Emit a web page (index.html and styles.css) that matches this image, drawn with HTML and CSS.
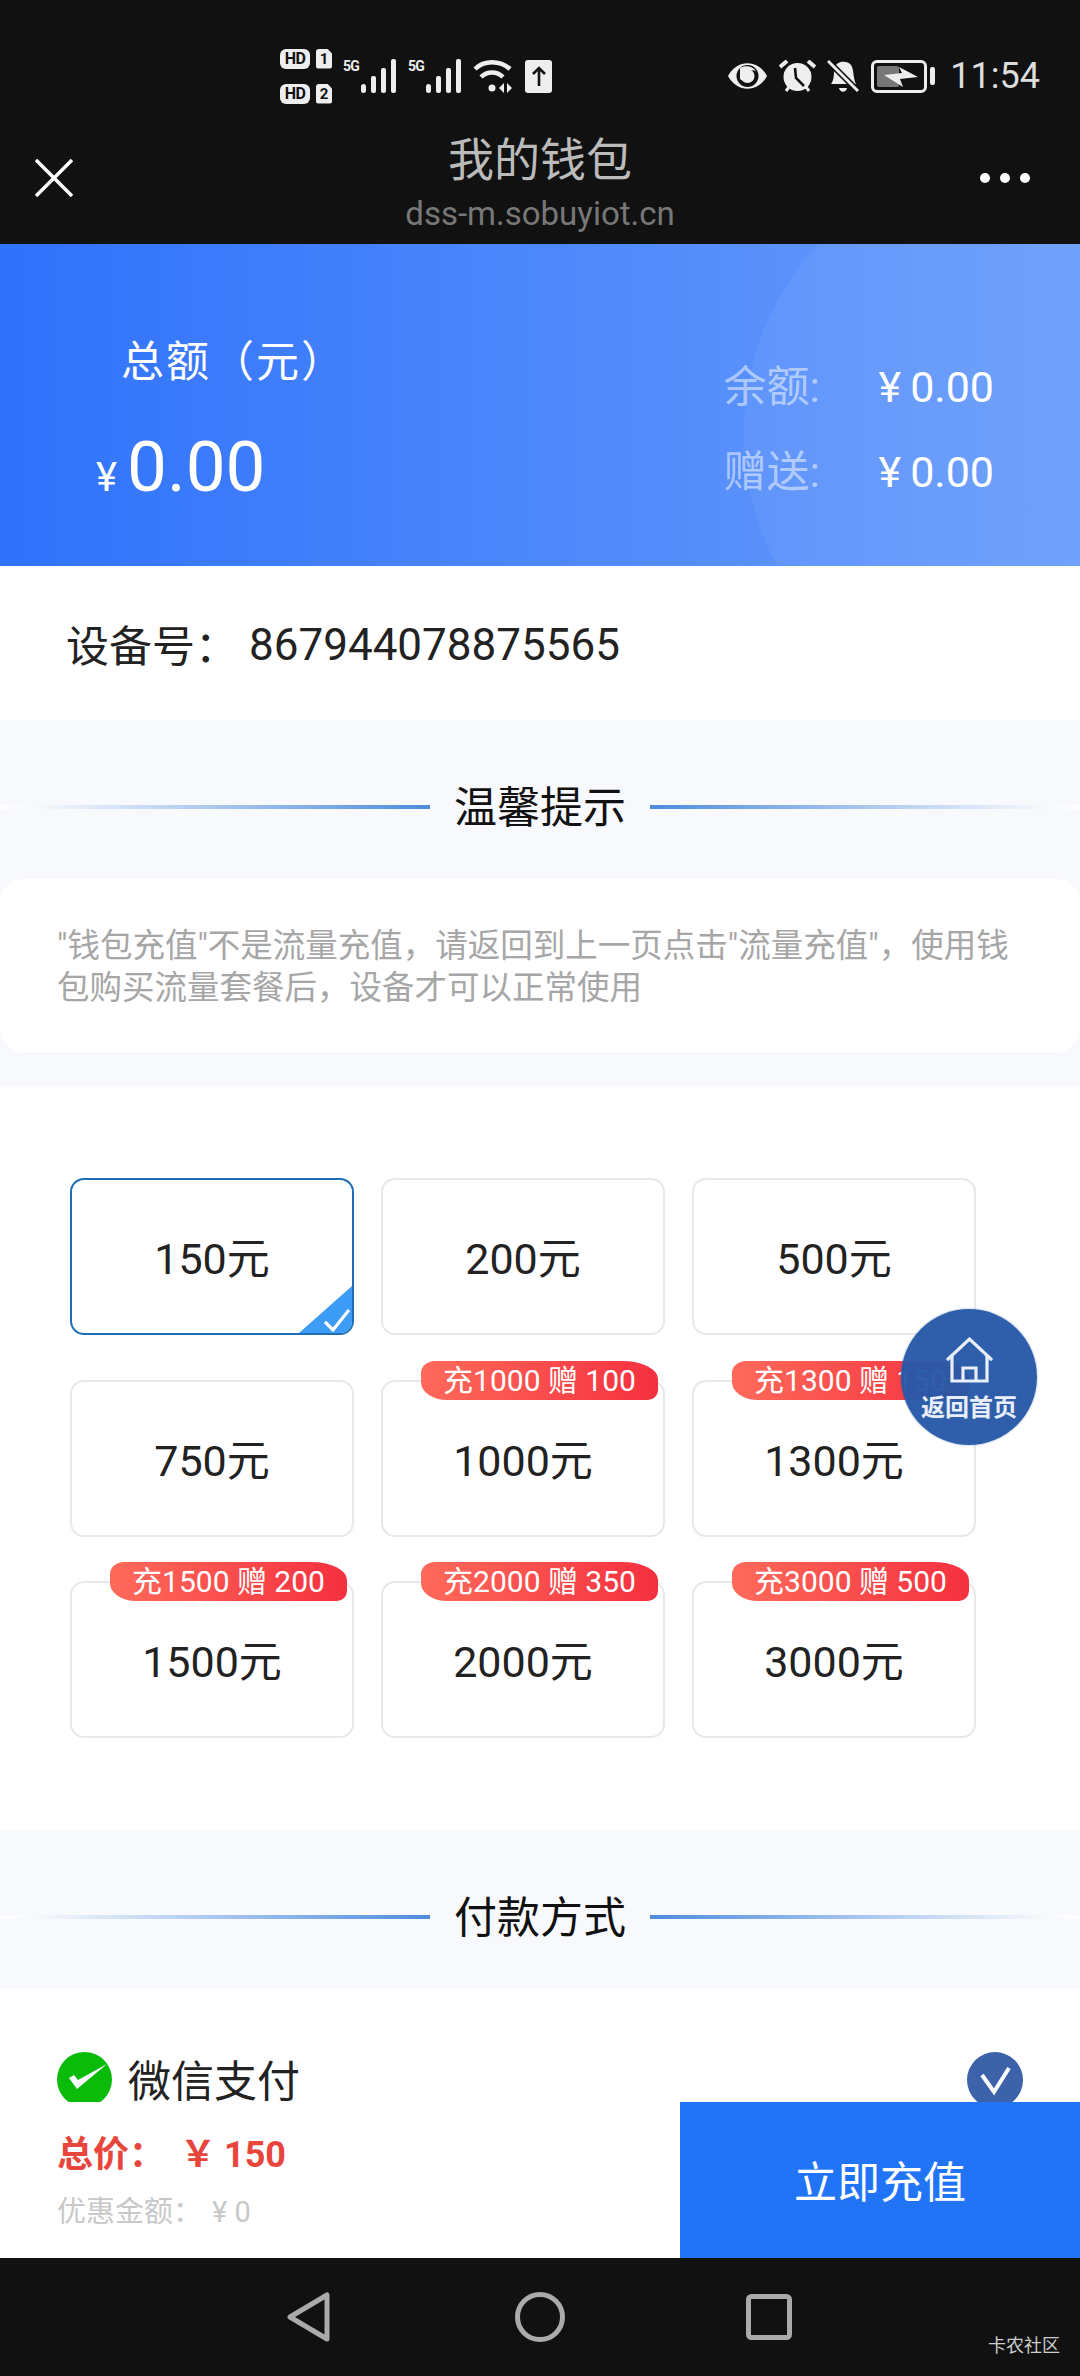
FILE: index.html
```html
<!DOCTYPE html>
<html lang="zh-CN">
<head>
  <meta charset="UTF-8">
  <title>我的钱包</title>
  <link rel="stylesheet" href="styles.css">
</head>
<body>
  <div class="page">

    <div class="topbar">
      <div class="statusbar">
        <div class="hd-col">
          <div class="hd-row"><span class="hd">HD</span><span class="sim">1</span></div>
          <div class="hd-row"><span class="hd">HD</span><span class="sim">2</span></div>
        </div>
        <div class="signal">
          <span>5G</span>
          <svg width="35" height="34" viewBox="0 0 35 34" fill="#eee"><rect x="0" y="25" width="5" height="9" rx="2.5"/><rect x="10" y="17" width="5" height="17" rx="2"/><rect x="20" y="9" width="5" height="25" rx="2"/><rect x="30" y="0" width="5" height="34" rx="2"/></svg>
        </div>
        <div class="signal">
          <span>5G</span>
          <svg width="35" height="34" viewBox="0 0 35 34" fill="#eee"><rect x="0" y="25" width="5" height="9" rx="2.5"/><rect x="10" y="17" width="5" height="17" rx="2"/><rect x="20" y="9" width="5" height="25" rx="2"/><rect x="30" y="0" width="5" height="34" rx="2"/></svg>
        </div>
        <svg class="wifi" width="39" height="34" viewBox="0 0 39 34" fill="none" stroke="#eee" stroke-width="4.5"><path d="M2 10 C11 1 27 1 37 10"/><path d="M8 18 C14 12 24 12 30 18"/><circle cx="19" cy="29" r="3.5" fill="#eee" stroke="none"/><path d="M31 24 L26 29 L31 34Z" fill="#eee" stroke="none"/><path d="M34 24 L39 29 L34 34Z" fill="#eee" stroke="none"/></svg>
        <div class="upbox">
          <svg width="14" height="20" viewBox="0 0 14 20" fill="none" stroke="#111" stroke-width="2.6"><path d="M7 20V2M1 8L7 2L13 8"/></svg>
        </div>
        <div class="status-right">
          <svg width="41" height="28" viewBox="0 0 41 28"><path d="M1 14 C10 -3 31 -3 40 14 C31 31 10 31 1 14Z" fill="#eee"/><circle cx="20.500" cy="14" r="11" fill="#111"/><circle cx="20.500" cy="14" r="7" fill="#eee"/><path d="M13 6 C18 3 26 4 29 9 C24 7 20 10 19 15 C18 19 15 19 13 17Z" fill="#eee"/></svg>
          <svg width="37" height="32" viewBox="0 0 37 32"><circle cx="18.500" cy="17" r="14" fill="#eee"/><path d="M16 8 L17 18 L25 26" fill="none" stroke="#111" stroke-width="2.6"/><path d="M1 7 L8 1M36 7 L29 1" stroke="#eee" stroke-width="4"/><path d="M7 31 L10 27M30 31 L27 27" stroke="#eee" stroke-width="3"/></svg>
          <svg width="32" height="34" viewBox="0 0 32 34"><path d="M4 25 C8 20 6 14 8 8 C10 2 20 1 24 6 C27 10 26 20 29 25Z" fill="#eee"/><path d="M12 29 C13 34 19 34 20 29Z" fill="#eee"/><path d="M1 2 L31 32" stroke="#111" stroke-width="6"/><path d="M1 2 L31 32" stroke="#eee" stroke-width="3"/></svg>
          <div class="battery">
            <div class="battery-box">
              <div class="battery-fill"></div>
              <svg class="bolt" width="34" height="20" viewBox="0 0 34 20" fill="#eee"><path d="M0 8 L18 6 L15 0 L34 10 L16 12 L19 20Z"/></svg>
            </div>
            <div class="battery-nub"></div>
          </div>
          <span class="clock">11:54</span>
        </div>
      </div>
      <div class="navbar">
        <svg width="38" height="38" viewBox="0 0 38 38" stroke="#fff" stroke-width="3.500"><path d="M1 1L37 37M37 1L1 37"/></svg>
        <div class="nav-title">
          <div class="nav-name">我的钱包</div>
          <div class="nav-url">dss-m.sobuyiot.cn</div>
        </div>
        <div class="dots"><i></i><i></i><i></i></div>
      </div>
    </div>

    <div class="hero">
      <div class="hero-left">
        <div class="hero-label">总额（元）</div>
        <div class="hero-amount"><span class="yen">¥</span>0.00</div>
      </div>
      <div class="hero-right">
        <div class="hero-row"><span class="hero-key">余额:</span><span class="hero-val"><span class="yen-s">¥</span>0.00</span></div>
        <div class="hero-row"><span class="hero-key">赠送:</span><span class="hero-val"><span class="yen-s">¥</span>0.00</span></div>
      </div>
    </div>

    <div class="device">
      <span class="device-key">设备号：</span><span class="device-no">867944078875565</span>
    </div>

    <div class="tips">
      <div class="sec-title">
        <div class="line"></div><h2>温馨提示</h2><div class="line line-r"></div>
      </div>
      <div class="notice">"钱包充值"不是流量充值，请返回到上一页点击"流量充值"，使用钱包购买流量套餐后，设备才可以正常使用</div>
    </div>

    <div class="options">
      <div class="grid">
        <div class="card selected">150元
          <div class="corner">
            <svg width="26" height="24" viewBox="0 0 26 24" fill="none" stroke="#fff" stroke-width="3.200"><path d="M1 14L9 22L25 2"/></svg>
          </div>
        </div>
        <div class="card">200元</div>
        <div class="card">500元</div>
        <div class="card">750元</div>
        <div class="card">1000元<span class="badge">充1000 赠 100</span></div>
        <div class="card">1300元<span class="badge">充1300 赠 150</span></div>
        <div class="card">1500元<span class="badge">充1500 赠 200</span></div>
        <div class="card">2000元<span class="badge">充2000 赠 350</span></div>
        <div class="card">3000元<span class="badge">充3000 赠 500</span></div>
      </div>
      <div class="home-btn">
        <svg width="47" height="46" viewBox="0 0 47 46" fill="none" stroke="#e8eefa" stroke-width="3.200"><path d="M1 23L23.500 2L46 23"/><path d="M6 19V44H41V19"/><path d="M17 44V31H30V44"/></svg>
        <span>返回首页</span>
      </div>
    </div>

    <div class="paytitle">
      <div class="sec-title">
        <div class="line"></div><h2>付款方式</h2><div class="line line-r"></div>
      </div>
    </div>

    <div class="payrow">
      <svg width="55" height="50" viewBox="0 0 55 50"><circle cx="27.500" cy="27.500" r="27.500" fill="#0abb0a"/><path d="M12 26L17 23L21 28L50 12L20 37Z" fill="#fff"/></svg>
      <span class="pay-name">微信支付</span>
      <svg class="pay-check" width="56" height="50" viewBox="0 0 56 50"><circle cx="28" cy="28" r="28" fill="#3c62aa"/><path d="M15 23L27 40L42 16" fill="none" stroke="#fff" stroke-width="4"/></svg>
    </div>

    <div class="checkout">
      <div class="sum">
        <div class="sum-total">总价：<span class="sum-price"><span class="sum-yen">￥</span>150</span></div>
        <div class="sum-off">优惠金额：<span class="sum-off-val">¥ 0</span></div>
      </div>
      <div class="pay-btn">立即充值</div>
    </div>

    <div class="sysnav">
      <svg width="44" height="50" viewBox="0 0 44 50" fill="none" stroke="#aaa" stroke-width="5" stroke-linejoin="round"><path d="M40 3V47L3 25Z"/></svg>
      <svg class="nav-home" width="50" height="50" viewBox="0 0 50 50" fill="none" stroke="#aaa" stroke-width="5"><circle cx="25" cy="25" r="22.500"/></svg>
      <svg class="nav-recent" width="46" height="46" viewBox="0 0 46 46" fill="none" stroke="#aaa" stroke-width="5"><rect x="2.500" y="2.500" width="41" height="41" rx="3"/></svg>
      <span class="watermark">卡农社区</span>
    </div>

  </div>
</body>
</html>
```

FILE: styles.css
```css
* {
  box-sizing: border-box;
}

body {
  margin: 0;
  background: #fff;
  font-family: Roboto, 'Noto Sans CJK SC', sans-serif;
  color: #222;
}

.page {
  width: 1080px;
  height: 2376px;
  overflow: hidden;
  display: flex;
  flex-direction: column;
}

/* top bars */
.topbar {
  height: 244px;
  background: #111;
}

.statusbar {
  height: 124px;
  padding: 28px 40px 0 280px;
  display: flex;
  align-items: center;
}

.hd-col {
  display: flex;
  flex-direction: column;
  gap: 15px;
  margin-right: 11px;
}

.hd-row {
  display: flex;
  gap: 6px;
}

.hd {
  width: 30px;
  height: 20px;
  background: #eee;
  color: #111;
  border-radius: 6px;
  font-size: 16px;
  font-weight: 700;
  line-height: 20px;
  text-align: center;
  letter-spacing: -0.5px;
}

.sim {
  width: 16px;
  height: 20px;
  background: #eee;
  color: #111;
  border-radius: 3px;
  font-size: 15px;
  font-weight: 700;
  line-height: 20px;
  text-align: center;
  clip-path: polygon(0 0, 70% 0, 100% 25%, 100% 100%, 0 100%);
}

.signal {
  display: flex;
  align-items: flex-start;
  width: 53px;
  margin-right: 12px;
}

.signal span {
  width: 18px;
  font-size: 14px;
  font-weight: 700;
  line-height: 14px;
  color: #eee;
  letter-spacing: -0.8px;
}

.wifi {
  margin-right: 13px;
}

.upbox {
  width: 27px;
  height: 33px;
  background: #eee;
  border-radius: 3px;
  display: flex;
  align-items: center;
  justify-content: center;
}

.status-right {
  margin-left: auto;
  display: flex;
  align-items: center;
  gap: 11px;
}

.battery {
  display: flex;
  align-items: center;
  gap: 3px;
  margin-left: 1px;
}

.battery-box {
  position: relative;
  width: 56px;
  height: 33px;
  border: 3px solid #eee;
  border-radius: 6px;
  padding: 3px;
}

.battery-fill {
  width: 22px;
  height: 100%;
  background: #777;
  border-radius: 2px;
}

.bolt {
  position: absolute;
  top: 4px;
  left: 10px;
}

.battery-nub {
  width: 5px;
  height: 18px;
  background: #eee;
  border-radius: 2px;
}

.clock {
  margin-left: 4px;
  font-size: 36px;
  line-height: 40px;
  color: #ddd;
}

.navbar {
  height: 120px;
  padding: 0 50px 0 35px;
  display: flex;
  align-items: center;
}

.navbar svg {
  margin-top: -12px;
}

.nav-title {
  flex: 1;
  text-align: center;
  padding-left: 27px;
}

.nav-name {
  font-size: 46px;
  line-height: 52px;
  color: #bbb;
}

.nav-url {
  font-size: 33px;
  line-height: 40px;
  margin-top: 8px;
  color: #777;
}

.dots {
  display: flex;
  gap: 10px;
  margin-top: -12px;
}

.dots i {
  width: 10px;
  height: 10px;
  border-radius: 50%;
  background: #fff;
}

/* blue header */
.hero {
  position: relative;
  height: 322px;
  overflow: hidden;
  background: linear-gradient(90deg, #2f72fb, #6a9dfb);
  display: flex;
  justify-content: space-between;
  color: #fff;
}

.hero::after {
  content: "";
  position: absolute;
  left: 744px;
  top: -90px;
  width: 560px;
  height: 560px;
  border-radius: 50%;
  background: rgba(255, 255, 255, 0.05);
}

.hero-left {
  padding: 95px 0 0 96px;
}

.hero-label {
  font-size: 43px;
  line-height: 46px;
  margin-left: 25px;
  letter-spacing: 2px;
}

.hero-amount {
  margin-top: 40px;
  font-size: 71px;
  line-height: 84px;
}

.yen {
  font-size: 40px;
  margin-right: 10px;
}

.hero-right {
  position: relative;
  z-index: 1;
  padding: 119px 86px 0 0;
  display: flex;
  flex-direction: column;
  gap: 37px;
}

.hero-row {
  display: flex;
  height: 48px;
  line-height: 48px;
}

.hero-key {
  width: 155px;
  font-size: 43px;
  color: rgba(255, 255, 255, 0.5);
}

.hero-val {
  font-size: 43px;
}

.yen-s {
  margin-right: 9px;
}

/* device row */
.device {
  height: 154px;
  padding-left: 66px;
  display: flex;
  align-items: center;
  font-size: 43px;
  color: #222;
}

.device-key {
  width: 183px;
}

.device-no {
  margin-top: 3px;
  font-size: 44px;
}

/* section title */
.sec-title {
  height: 159px;
  padding-top: 68px;
  display: flex;
  justify-content: center;
  align-items: flex-start;
  gap: 24px;
}

.sec-title h2 {
  margin: 0;
  font-size: 43px;
  font-weight: 400;
  line-height: 40px;
  color: #111;
}

.line {
  width: 430px;
  height: 4px;
  margin-top: 17px;
  background: linear-gradient(90deg, #fff 0, #f7f9fd 8%, #4d8cde 100%);
}

.line-r {
  background: linear-gradient(270deg, #fff 0, #f7f9fd 8%, #4d8cde 100%);
}

.tips {
  height: 366px;
  background: #f7f9fd;
}

.notice {
  height: 173px;
  padding: 46px 57px 0;
  background: #fff;
  border-radius: 24px;
  font-size: 32.5px;
  line-height: 42px;
  color: #a6a6a6;
}

/* amounts */
.options {
  position: relative;
  height: 744px;
  padding: 92px 0 0 70px;
}

.grid {
  display: grid;
  grid-template-columns: repeat(3, 284px);
  grid-auto-rows: 157px;
  column-gap: 27px;
  row-gap: 44.5px;
}

.card {
  position: relative;
  border: 2px solid #e8e8e8;
  border-radius: 14px;
  padding-bottom: 3px;
  display: flex;
  align-items: center;
  justify-content: center;
  font-size: 43px;
  color: #222;
}

.selected {
  border-color: #1e6fb8;
  overflow: hidden;
}

.corner {
  position: absolute;
  right: 0;
  bottom: 0;
  width: 53px;
  height: 47px;
  background: #3d9cf5;
  clip-path: polygon(100% 0, 100% 100%, 0 100%);
}

.corner svg {
  position: absolute;
  right: 2px;
  bottom: 1px;
}

.badge {
  position: absolute;
  top: -21px;
  left: 38px;
  width: 237px;
  height: 39px;
  border-radius: 14px 36px 10px 26px / 12px 18px 10px 18px;
  background: linear-gradient(90deg, #ff6a5a, #f5303f);
  color: #fff;
  font-size: 30px;
  line-height: 39px;
  text-align: center;
  white-space: nowrap;
}

.home-btn {
  position: absolute;
  left: 901px;
  top: 223px;
  width: 136px;
  height: 136px;
  border-radius: 50%;
  background: rgba(38, 88, 168, 0.96);
  box-shadow: 0 0 2px rgba(38, 88, 168, 0.6);
  display: flex;
  flex-direction: column;
  align-items: center;
  padding-top: 28px;
  color: #e8eefa;
}

.home-btn span {
  margin-top: 10px;
  font-size: 24px;
  font-weight: 700;
  line-height: 30px;
}

/* payment */
.paytitle {
  height: 159px;
  background: #f7f9fd;
}

.payrow {
  height: 113px;
  padding: 63px 57px 0;
  display: flex;
  align-items: flex-start;
}

.pay-name {
  margin: 10px 0 0 16px;
  font-size: 43px;
  line-height: 40px;
  color: #222;
}

.pay-check {
  margin-left: auto;
}

.checkout {
  height: 156px;
  display: flex;
  justify-content: space-between;
}

.sum {
  padding: 33px 0 0 57px;
}

.sum-total {
  font-size: 36px;
  font-weight: 700;
  line-height: 40px;
  color: #e8453c;
}

.sum-price {
  margin-left: 15px;
}

.sum-yen {
  margin-right: 8px;
}

.sum-off {
  margin-top: 19px;
  font-size: 29px;
  line-height: 36px;
  color: #c8c8c8;
}

.sum-off-val {
  margin-left: 10px;
}

.pay-btn {
  width: 400px;
  padding-bottom: 2px;
  background: #2274f7;
  color: #fff;
  display: flex;
  align-items: center;
  justify-content: center;
  font-size: 43px;
}

/* system nav */
.sysnav {
  position: relative;
  height: 118px;
  background: #111;
  padding-left: 287px;
  display: flex;
  align-items: center;
}

.nav-home {
  margin-left: 184px;
}

.nav-recent {
  margin-left: 181px;
}

.watermark {
  position: absolute;
  left: 988px;
  top: 76px;
  font-size: 18px;
  line-height: 24px;
  color: #ccc;
}
```
